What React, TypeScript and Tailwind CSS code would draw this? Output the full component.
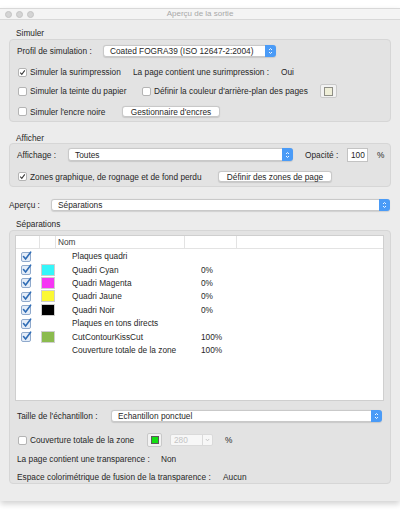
import React from "react";

function Stepper() {
  return (
    <span className="w-[11px] -my-px -mr-px bg-[#4a9bf7] rounded-r-[3px] flex items-center justify-center">
      <svg width="5" height="8" viewBox="0 0 5 8">
        <path d="M1 3 L2.5 1.5 L4 3 M1 5 L2.5 6.5 L4 5" fill="none" stroke="#fff" strokeWidth="0.9" />
      </svg>
    </span>
  );
}

function Select({ text, className }: { text: string; className: string }) {
  return (
    <div className={`flex bg-white rounded-[3px] border border-[#c9c9c9] shadow-[0_0.5px_1px_rgba(0,0,0,0.12)] ${className}`}>
      <span className="flex-1 pl-[6px] flex items-center">{text}</span>
      <Stepper />
    </div>
  );
}

function Check({ checked = false }: { checked?: boolean }) {
  return (
    <span className="w-[9px] h-[9px] shrink-0 bg-white border border-[#b4b4b4] rounded-[2px] flex items-center justify-center">
      {checked && (
        <svg width="7" height="7" viewBox="0 0 7 7">
          <path d="M1.2 3.6 L2.8 5.3 L5.8 1.4" fill="none" stroke="#3c3c3c" strokeWidth="1.1" />
        </svg>
      )}
    </span>
  );
}

function BlueCheck() {
  return (
    <svg width="11" height="11" viewBox="0 0 11 11">
      <rect x="0.5" y="1.5" width="9" height="9" rx="1.5" fill="#e4edf8" stroke="#8fa9cc" />
      <path d="M2.5 5.5 L4.6 8 L9.6 1.2" fill="none" stroke="#2f6cb5" strokeWidth="1.6" strokeLinecap="round" />
    </svg>
  );
}

function Button({ text, className }: { text: string; className: string }) {
  return (
    <div className={`h-[11px] flex items-center justify-center bg-white rounded-[3px] border border-[#c8c8c8] shadow-[0_0.5px_1px_rgba(0,0,0,0.12)] ${className}`}>
      {text}
    </div>
  );
}

const rows = [
  { name: "Plaques quadri", color: "", pct: "" },
  { name: "Quadri Cyan", color: "bg-[#35f6fa]", pct: "0%" },
  { name: "Quadri Magenta", color: "bg-[#f635f4]", pct: "0%" },
  { name: "Quadri Jaune", color: "bg-[#fbf834]", pct: "0%" },
  { name: "Quadri Noir", color: "bg-[#000000]", pct: "0%" },
  { name: "Plaques en tons directs", color: "", pct: "" },
  { name: "CutContourKissCut", color: "bg-[#8bbb4e]", pct: "100%" },
  { name: "Couverture totale de la zone", color: "", pct: "100%", nocheck: true },
];

export default function App() {
  return (
    <div className="w-[400px] h-[516px] bg-white overflow-hidden font-['Liberation_Sans',Arial,sans-serif] text-[8.3px] leading-[10px] text-[#272727]">
      <div className="h-[8px]" />
      <div className="h-[493px] bg-[#ececec] shadow-[0_3px_6px_rgba(0,0,0,0.18)]">
        {/* title bar */}
        <div className="h-[12px] bg-[#f4f4f4] border-t border-b border-[#d8d8d8] flex items-center relative">
          <div className="flex gap-[4px] pl-[5px]">
            <span className="w-[7px] h-[7px] rounded-full bg-[#d4d4d4] border border-[#c4c4c4]" />
            <span className="w-[7px] h-[7px] rounded-full bg-[#d4d4d4] border border-[#c4c4c4]" />
            <span className="w-[7px] h-[7px] rounded-full bg-[#d4d4d4] border border-[#c4c4c4]" />
          </div>
          <span className="absolute left-0 right-0 text-center text-[8px] text-[#a8a8a8]">Aperçu de la sortie</span>
        </div>

        <div className="px-[9px]">
          {/* Simuler */}
          <div className="mt-[8px] h-[10px] pl-[7px]">Simuler</div>
          <div className="mt-[1px] bg-[#e3e3e3] border border-[#d6d6d6] rounded-[4px] pl-[7px] pt-[5px] pb-[4px]">
            <div className="flex items-center h-[12px]">
              <span className="w-[86px]">Profil de simulation :</span>
              <Select text="Coated FOGRA39 (ISO 12647-2:2004)" className="w-[173px] h-[12px]" />
            </div>
            <div className="flex items-center h-[12px] mt-[9px]">
              <div className="w-[116px] flex items-center gap-[3px] pl-[1px]">
                <Check checked />
                <span>Simuler la surimpression</span>
              </div>
              <span className="w-[148px]">La page contient une surimpression :</span>
              <span>Oui</span>
            </div>
            <div className="flex items-center h-[14px] mt-[6px]">
              <div className="w-[125px] flex items-center gap-[3px] pl-[1px]">
                <Check />
                <span>Simuler la teinte du papier</span>
              </div>
              <div className="w-[178px] flex items-center gap-[3px]">
                <Check />
                <span>Définir la couleur d'arrière-plan des pages</span>
              </div>
              <span className="w-[17px] h-[14px] bg-[#f2f2f2] border border-[#c9c9c9] rounded-[2px] flex items-center justify-center">
                <span className="w-[9px] h-[9px] bg-[#efefd8] border border-[#8e8e86]" />
              </span>
            </div>
            <div className="flex items-center h-[11px] mt-[8px]">
              <div className="w-[105px] flex items-center gap-[3px] pl-[1px]">
                <Check />
                <span>Simuler l'encre noire</span>
              </div>
              <Button text="Gestionnaire d'encres" className="w-[98px]" />
            </div>
          </div>

          {/* Afficher */}
          <div className="mt-[11px] h-[10px] pl-[7px]">Afficher</div>
          <div className="bg-[#e3e3e3] border border-[#d6d6d6] rounded-[4px] pl-[7px] pt-[4px] pb-[4px]">
            <div className="flex items-center h-[13px]">
              <span className="w-[51px]">Affichage :</span>
              <Select text="Toutes" className="w-[225px] h-[13px]" />
              <span className="ml-[12px] w-[42px]">Opacité :</span>
              <span className="w-[21px] h-[14px] bg-white border border-[#c3c3c3] pl-[3px] flex items-center">100</span>
              <span className="ml-[9px]">%</span>
            </div>
            <div className="flex items-center h-[11px] mt-[10px]">
              <div className="w-[201px] flex items-center gap-[3px] pl-[1px]">
                <Check checked />
                <span>Zones graphique, de rognage et de fond perdu</span>
              </div>
              <Button text="Définir des zones de page" className="w-[114px]" />
            </div>
          </div>

          {/* Aperçu */}
          <div className="mt-[12px] flex items-center h-[12px]">
            <span className="w-[42px]">Aperçu :</span>
            <Select text="Séparations" className="w-[339px] h-[12px]" />
          </div>

          {/* Séparations */}
          <div className="mt-[8px] h-[10px] pl-[7px]">Séparations</div>
          <div className="mt-[1px] bg-[#e3e3e3] border border-[#d6d6d6] rounded-[4px] pl-[5px] pr-[6px] pt-[4px] pb-[1px]">
            <div className="h-[166px] bg-white border border-[#cfcfcf]">
              <div className="h-[13px] flex border-b border-[#e3e3e3] text-[#3a3a3a]">
                <span className="w-[24px] border-r border-[#e3e3e3]" />
                <span className="w-[16px] border-r border-[#e3e3e3]" />
                <span className="w-[129px] border-r border-[#e3e3e3] pl-[2px] flex items-center">Nom</span>
                <span className="w-[52px] border-r border-[#e3e3e3]" />
              </div>
              <div className="pt-[0.5px]">
                {rows.map((r) => (
                  <div key={r.name} className="h-[13.4px] flex items-center">
                    <span className="w-[24px] pl-[5px] flex items-center">{!r.nocheck && <BlueCheck />}</span>
                    <span className="w-[16px] pl-[1px] flex items-center">
                      {r.color && <span className={`w-[14px] h-[12px] border border-[#cfcfcf] ${r.color}`} />}
                    </span>
                    <span className="w-[129px] pl-[16px]">{r.name}</span>
                    <span className="pl-[16px]">{r.pct}</span>
                  </div>
                ))}
              </div>
            </div>

            <div className="pl-[2px]">
              <div className="mt-[9px] flex items-center h-[12px]">
                <span className="w-[94px]">Taille de l'échantillon :</span>
                <Select text="Echantillon ponctuel" className="w-[271px] h-[12px]" />
              </div>
              <div className="mt-[11px] flex items-center h-[14px]">
                <div className="w-[130px] flex items-center gap-[3px] pl-[1px]">
                  <Check />
                  <span>Couverture totale de la zone</span>
                </div>
                <span className="w-[15px] h-[14px] bg-[#f2f2f2] border border-[#c9c9c9] rounded-[2px] flex items-center justify-center">
                  <span className="w-[8px] h-[8px] bg-[#12e012] border border-[#5a5a5a]" />
                </span>
                <div className="ml-[8px] w-[43px] h-[12px] flex bg-[#f7f7f7] border border-[#dadada] rounded-[2px] text-[#c4c4c4]">
                  <span className="flex-1 pl-[3px] flex items-center">280</span>
                  <span className="w-[10px] border-l border-[#dadada] flex items-center justify-center">
                    <svg width="5" height="4" viewBox="0 0 5 4">
                      <path d="M0.8 1 L2.5 2.8 L4.2 1" fill="none" stroke="#bdbdbd" strokeWidth="0.8" />
                    </svg>
                  </span>
                </div>
                <span className="ml-[12px]">%</span>
              </div>
              <div className="mt-[7px] flex items-center h-[10px]">
                <span className="w-[144px]">La page contient une transparence :</span>
                <span>Non</span>
              </div>
              <div className="mt-[8px] flex items-center h-[10px]">
                <span className="w-[206px]">Espace colorimétrique de fusion de la transparence :</span>
                <span>Aucun</span>
              </div>
            </div>
          </div>
        </div>
      </div>
    </div>
  );
}
